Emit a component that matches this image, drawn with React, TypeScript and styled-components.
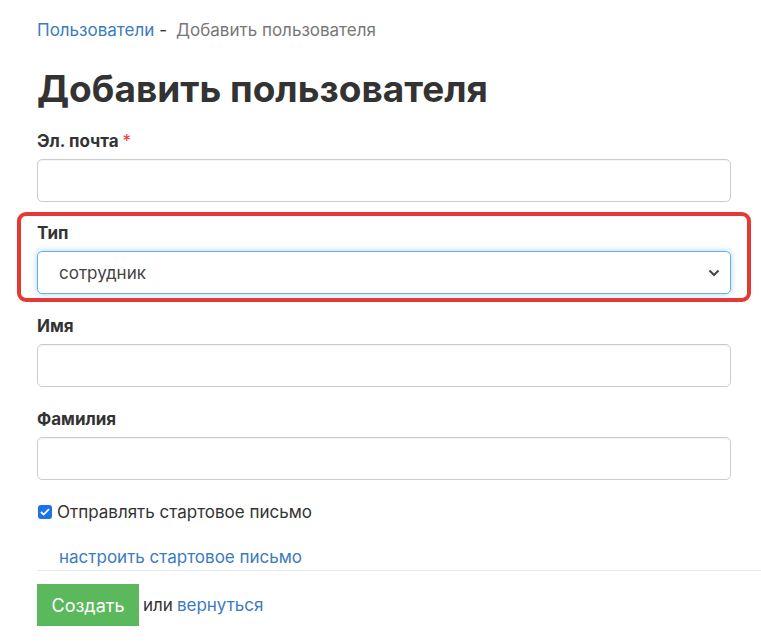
import React from 'react'
import styled, { createGlobalStyle } from 'styled-components'

const GlobalStyle = createGlobalStyle`
  body {
    margin: 0;
    background: #fff;
    font-family: Inter, 'Noto Sans', sans-serif;
    color: #333;
  }
`

const Page = styled.div`
  padding: 18px 0 0 37px;
`

const Content = styled.div`
  width: 694px;
`

const Breadcrumb = styled.div`
  font-size: 17px;
  line-height: 24px;
  color: #777;
`

const Link = styled.a`
  color: #3a7cbd;
  text-decoration: none;
`

const Separator = styled.span`
  color: #333;
  margin: 0 9px 0 5px;
`

const Title = styled.h1`
  margin: 25px 0 19px;
  font-size: 37px;
  line-height: 44px;
  font-weight: 700;
  color: #333;
`

const Field = styled.div<{ $gap?: number }>`
  margin-bottom: ${({ $gap }) => $gap ?? 21}px;
`

const Highlight = styled.div`
  margin: -1px -20px 13px;
  padding: 6px 16px 4px;
  border: 4px solid #e53935;
  border-radius: 9px;
`

const Label = styled.label`
  display: block;
  font-size: 17px;
  font-weight: 700;
  line-height: 22px;
  margin-bottom: 7px;
`

const Required = styled.span`
  color: #e53935;
  font-weight: 400;
  margin-left: 4px;
`

const Input = styled.input`
  box-sizing: border-box;
  display: block;
  width: 100%;
  height: 43px;
  padding: 6px 12px;
  border: 1px solid #ccc;
  border-radius: 5px;
  font: inherit;
  font-size: 17px;
  box-shadow: inset 0 1px 1px rgba(0, 0, 0, 0.05);
`

const SelectBox = styled.div`
  box-sizing: border-box;
  height: 43px;
  display: flex;
  align-items: center;
  padding: 0 10px 0 21px;
  border: 1px solid #66afe9;
  border-radius: 5px;
  box-shadow: 0 0 6px rgba(102, 175, 233, 0.55);
  font-size: 17px;
  color: #444;
`

const SelectValue = styled.span`
  flex: 1;
`

const CheckRow = styled.label`
  display: flex;
  align-items: center;
  gap: 5px;
  margin-top: 20px;
  font-size: 17px;
  line-height: 24px;
`

const Check = styled.span`
  width: 14px;
  height: 14px;
  border-radius: 3px;
  background: #1a73e8;
  display: flex;
  align-items: center;
  justify-content: center;
  margin-left: 1px;
`

const SubLink = styled(Link)`
  display: block;
  margin: 21px 0 0 22px;
  font-size: 17px;
  line-height: 24px;
`

const Divider = styled.hr`
  margin: 1px -30px 13px 0;
  border: 0;
  border-top: 1px solid #e8e8e8;
`

const Actions = styled.div`
  display: flex;
  align-items: center;
  font-size: 17px;
  gap: 4px;
`

const Submit = styled.button`
  width: 102px;
  height: 42px;
  border: 0;
  background: #5cb85c;
  color: #fff;
  font: inherit;
  font-size: 18px;
  padding: 0;
`

export default function App() {
  return (
    <>
      <GlobalStyle />
      <Page>
        <Content>
          <Breadcrumb>
            <Link href="#">Пользователи</Link>
            <Separator>-</Separator>
            Добавить пользователя
          </Breadcrumb>
          <Title>Добавить пользователя</Title>

          <Field $gap={11}>
            <Label>
              Эл. почта<Required>*</Required>
            </Label>
            <Input type="email" />
          </Field>

          <Highlight>
            <Label>Тип</Label>
            <SelectBox>
              <SelectValue>сотрудник</SelectValue>
              <svg width="12" height="8" viewBox="0 0 12 8">
                <path d="M1.5 1.5 6 6l4.5-4.5" fill="none" stroke="#444" strokeWidth="2" />
              </svg>
            </SelectBox>
          </Highlight>

          <Field>
            <Label>Имя</Label>
            <Input type="text" />
          </Field>

          <Field $gap={0}>
            <Label>Фамилия</Label>
            <Input type="text" />
          </Field>

          <CheckRow>
            <Check>
              <svg width="10" height="8" viewBox="0 0 10 8">
                <path d="M1 4l2.6 2.6L9 1.2" fill="none" stroke="#fff" strokeWidth="1.8" />
              </svg>
            </Check>
            Отправлять стартовое письмо
          </CheckRow>
          <SubLink href="#">настроить стартовое письмо</SubLink>
          <Divider />

          <Actions>
            <Submit>Создать</Submit>
            или <Link href="#">вернуться</Link>
          </Actions>
        </Content>
      </Page>
    </>
  )
}
